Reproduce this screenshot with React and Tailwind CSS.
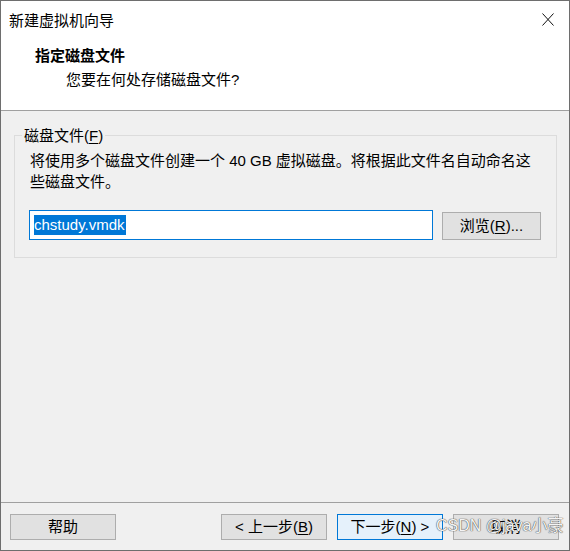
import React from 'react';

const Btn = ({ children, primary = false, className = '' }) => (
  <div
    className={`flex items-center justify-center h-[26px] w-[106px] border leading-[20px] ${
      primary ? 'bg-[#e5f1fb] border-[#0078d7]' : 'bg-[#e1e1e1] border-[#adadad]'
    } ${className}`}
  >
    {children}
  </div>
);

export default function App() {
  return (
    <div className="relative w-[570px] h-[551px] border border-[#6e6e6e] bg-[#f0f0f0] flex flex-col text-[15px] text-black font-['Liberation_Sans','Noto_Sans_CJK_SC',sans-serif]">
      {/* Header */}
      <div className="h-[109px] bg-white">
        <div className="flex items-start justify-between">
          <div className="pl-[8px] pt-[10px] leading-[20px]">新建虚拟机向导</div>
          <svg className="mt-[12px] mr-[15px]" width="12" height="13" viewBox="0 0 12 13">
            <path d="M0.5 0.5 L11.5 12.5 M11.5 0.5 L0.5 12.5" stroke="#111" strokeWidth="1" fill="none" />
          </svg>
        </div>
        <div className="pl-[34px] mt-[15px] font-bold leading-[20px]">指定磁盘文件</div>
        <div className="pl-[65px] mt-[4px] leading-[20px]">您要在何处存储磁盘文件?</div>
      </div>
      <div className="h-px bg-[#a0a0a0]" />

      {/* Body */}
      <div className="flex-1">
        <div className="relative mt-[24px] ml-[13px] mr-[12px] border border-[#dcdcdc] pt-[14px] pl-[14px] pr-[15px] pb-[17px]">
          <div className="absolute -top-[10px] left-[7px] px-[2px] bg-[#f0f0f0] leading-[20px]">
            磁盘文件(<span className="underline underline-offset-2">F</span>)
          </div>
          <p className="leading-[21px] whitespace-nowrap pl-[1px]">
            将使用多个磁盘文件创建一个 40 GB 虚拟磁盘。将根据此文件名自动命名这
            <br />
            些磁盘文件。
          </p>
          <div className="mt-[18px] flex items-start gap-[9px]">
            <div className="flex-1 h-[30px] bg-white border border-[#0078d7] flex items-center pl-[4px]">
              <span className="bg-[#0078d7] text-white leading-[20px] pr-[1px]">chstudy.vmdk</span>
            </div>
            <div className="mt-[2px] w-[99px] h-[28px] bg-[#e1e1e1] border border-[#adadad] flex items-center justify-center leading-[20px]">
              浏览(<span className="underline underline-offset-2">R</span>)...
            </div>
          </div>
        </div>
      </div>

      {/* Footer */}
      <div className="h-px bg-[#a0a0a0]" />
      <div className="h-[47px] flex items-start justify-between pt-[11px] pl-[9px] pr-[10px]">
        <Btn>帮助</Btn>
        <div className="flex gap-[10px]">
          <Btn>
            &lt; 上一步(<span className="underline underline-offset-2">B</span>)
          </Btn>
          <Btn primary>
            下一步(<span className="underline underline-offset-2">N</span>) &gt;
          </Btn>
          <Btn>取消</Btn>
        </div>
      </div>

      {/* Watermark */}
      <div className="absolute left-[435px] top-[515px] leading-[20px] text-[16px] text-[#f4f4f4] whitespace-nowrap [text-shadow:0_0_1px_#444,0_0_1px_#444]">
        CSDN @java小豪
      </div>
    </div>
  );
}
